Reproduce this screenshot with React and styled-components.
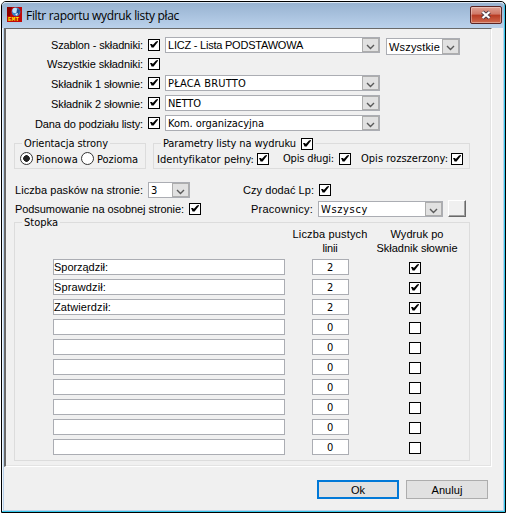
import React, { useLayoutEffect, useRef } from "react";
import styled, { createGlobalStyle } from "styled-components";

const GlobalStyle = createGlobalStyle`
  * {
    box-sizing: border-box;
  }
  body {
    margin: 0;
    background: #fff;
    color: #000;
    font-family: "Liberation Sans", Arial, sans-serif;
    font-size: 11px;
    line-height: 14px;
    overflow: hidden;
  }
`;

// keeps a caption at its designed width, whichever font ends up being used
const Caption = ({ w, children, ...rest }) => {
  const ref = useRef(null);
  useLayoutEffect(() => {
    const el = ref.current;
    el.style.letterSpacing = "0px";
    const natural = el.getBoundingClientRect().width;
    el.style.letterSpacing = `${(w - natural) / el.textContent.length}px`;
  }, [w, children]);
  return (
    <Text ref={ref} {...rest}>
      {children}
    </Text>
  );
};

const CheckBox = ({ checked, ...rest }) => (
  <Box {...rest}>
    {checked && (
      <svg width="10" height="10" viewBox="0 0 10 10">
        <path d="M1 4 L3 4 L3.8 5 L7 1.5 L9 1 L9 1.8 L4.6 7.4 L2.6 7.4 Z" fill="#000" />
      </svg>
    )}
  </Box>
);

const Select = ({ text, textW, $font, $dy, ...rest }) => (
  <SelectBox {...rest}>
    <SelectValue>
      <Caption w={textW} $font={$font} $dy={$dy}>
        {text}
      </Caption>
    </SelectValue>
    <Arrow>
      <svg width="9" height="6" viewBox="0 0 9 6">
        <path d="M1 1 L4.5 4.5 L8 1" fill="none" stroke="#5a5a5a" strokeWidth="1.4" />
      </svg>
    </Arrow>
  </SelectBox>
);

const components = [
  { label: "Szablon - składniki:", w: 92, h: 20, value: "LICZ - Lista PODSTAWOWA", vw: 135, extra: true },
  { label: "Wszystkie składniki:", w: 96, h: 18 },
  { label: "Składnik 1 słownie:", w: 92, h: 20, dy: 1, value: "PŁACA BRUTTO", vw: 78, font: "tahoma" },
  { label: "Składnik 2 słownie:", w: 92, h: 20, dy: 1, value: "NETTO", vw: 33, font: "tahoma" },
  { label: "Dana do podziału listy:", w: 108, h: 20, dy: 1, value: "Kom. organizacyjna", vw: 96, font: "tahoma" },
];

const footer = [
  { name: "Sporządził:", w: 54, lines: 2, print: true },
  { name: "Sprawdził:", w: 52, lines: 2, print: true },
  { name: "Zatwierdził:", w: 57, lines: 2, print: true },
  ...Array.from({ length: 7 }, () => ({ name: "", lines: 0, print: false })),
];

const App = () => {
  return (
    <>
      <GlobalStyle />
      <Window>
        <TitleBar>
          <AppIcon width="15" height="15" viewBox="0 0 15 15">
            <rect width="15" height="15" fill="#c00808" />
            <path d="M0 0 H5 L3 9 H0 Z" fill="#8e0000" />
            <circle cx="9" cy="4.8" r="4.4" fill="#3b7fc4" />
            <circle cx="8" cy="3.4" r="2.6" fill="#bfe0f5" />
            <path d="M10 2 L13 3 L12 7 L9 9 Z" fill="#1d4f94" />
            <path d="M8 7 L11 6 L10 9 Z" fill="#e4f2fa" />
            <text x="1" y="14" fontSize="6" fontWeight="bold" fontFamily="Liberation Mono, monospace" fill="#ffee00" textLength="11">
              EMT
            </text>
          </AppIcon>
          <Caption w={153} $font="title">
            Filtr raportu wydruk listy płac
          </Caption>
          <Close>
            <svg width="12" height="10" viewBox="0 0 12 10">
              <path d="M2.5 2 L9.5 8 M9.5 2 L2.5 8" stroke="#4c3a44" strokeWidth="4" />
              <path d="M2.5 2 L9.5 8 M9.5 2 L2.5 8" stroke="#fff" strokeWidth="2.2" />
            </svg>
          </Close>
        </TitleBar>

        <Panel>
          {components.map((c) => (
            <Row key={c.label} $h={c.h}>
              <Label $w={137}>
                <Caption w={c.w} $dy={c.dy}>
                  {c.label}
                </Caption>
              </Label>
              <CheckBox checked />
              {c.value && <Select $w={215} text={c.value} textW={c.vw} $font={c.font} $dy={c.dy} />}
              {c.extra && <Select $w={74} $h={17} $ml={1} $mt={3} text="Wszystkie" textW={51} />}
            </Row>
          ))}

          <Groups>
            <Group $w={132} $h={33}>
              <Legend>
                <Caption w={84} $font="tahoma">
                  Orientacja strony
                </Caption>
              </Legend>
              <Options $pl={5}>
                <Radio $on />
                <Caption w={42} $font="tahoma" $dy={1}>
                  Pionowa
                </Caption>
                <Radio />
                <Caption w={41} $font="tahoma" $dy={1}>
                  Pozioma
                </Caption>
              </Options>
            </Group>
            <Group $w={317} $h={33}>
              <Legend>
                <Caption w={133} $font="tahoma">
                  Parametry listy na wydruku
                </Caption>
                <CheckBox checked $ml={5} />
              </Legend>
              <Options $pl={3}>
                <Caption w={97} $font="tahoma" $dy={1}>
                  Identyfikator pełny:
                </Caption>
                <CheckBox checked $mt={1} />
                <Caption w={51} $font="tahoma" $ml={11}>
                  Opis długi:
                </Caption>
                <CheckBox checked $ml={2} />
                <Caption w={87} $font="tahoma" $ml={7}>
                  Opis rozszerzony:
                </Caption>
                <CheckBox checked />
              </Options>
            </Group>
          </Groups>

          <Row $h={20} $mt={11}>
            <Label $w={137}>
              <Caption w={128}>Liczba pasków na stronie:</Caption>
            </Label>
            <Select $w={42} text="3" textW={7} $font="tahoma" $dy={1} />
            <Label $w={119}>
              <Caption w={71}>Czy dodać Lp:</Caption>
            </Label>
            <CheckBox checked />
          </Row>
          <Row $h={18}>
            <Label $w={178}>
              <Caption w={169}>Podsumowanie na osobnej stronie:</Caption>
            </Label>
            <CheckBox checked />
            <Label $w={107}>
              <Caption w={62}>Pracownicy:</Caption>
            </Label>
            <Select $w={125} text="Wszyscy" textW={47} $font="tahoma" $dy={1} />
            <Picker />
          </Row>

          <Group $w={456} $h={246} $ml={8} $mt={-3}>
            <Legend>
              <Caption w={34} $font="tahoma">
                Stopka
              </Caption>
            </Legend>
            <Headers>
              <Header>
                <Caption w={75}>Liczba pustych</Caption>
                <Caption w={15}>linii</Caption>
              </Header>
              <Header>
                <Caption w={53}>Wydruk po</Caption>
                <Caption w={81}>Składnik słownie</Caption>
              </Header>
            </Headers>
            <Signers>
              {footer.map((f, index) => (
                <Signer key={index}>
                  <Field>{f.name && <Caption w={f.w}>{f.name}</Caption>}</Field>
                  <Field $center>
                    <Caption w={7} $font="tahoma" $dy={1}>
                      {f.lines}
                    </Caption>
                  </Field>
                  <CheckBox checked={f.print} $mt={2} />
                </Signer>
              ))}
            </Signers>
          </Group>
        </Panel>

        <Actions>
          <Button $primary>
            <Caption w={14}>Ok</Caption>
          </Button>
          <Button>
            <Caption w={31}>Anuluj</Caption>
          </Button>
        </Actions>
      </Window>
    </>
  );
};

const fonts = {
  tahoma: `"DejaVu Sans Condensed", "DejaVu Sans", sans-serif`,
  title: `"Open Sans", "Noto Sans", sans-serif`,
};

const Window = styled.div`
  width: 505px;
  height: 512px;
  margin: 1px 0 0 1px;
  border: 1px solid #000;
  border-radius: 5px 5px 0 0;
  background: #f0f0f0;
  box-shadow: inset -1px -1px 0 #35c8ea, inset 1px 0 0 #eef5fb, inset 2px 0 0 #b9d1ea, inset -2px -2px 0 #b9d1ea;
`;

const TitleBar = styled.div`
  display: flex;
  align-items: center;
  height: 26px;
  margin-right: 1px;
  padding: 0 2px 0 5px;
  border-top: 1px solid #dce8f4;
  border-radius: 4px 4px 0 0;
  background: linear-gradient(#98b3d1, #bad1eb);
`;

const AppIcon = styled.svg`
  margin: -2px 4px 0 0;
`;

const Close = styled.div`
  display: flex;
  align-items: center;
  justify-content: center;
  width: 32px;
  height: 18px;
  margin: -1px 0 0 auto;
  border: 1px solid #5a2525;
  border-radius: 2px;
  background: linear-gradient(#dfa193 0%, #cf7766 45%, #b73a22 50%, #cf6a4e 100%);
  box-shadow: inset 0 0 0 1px rgba(255, 255, 255, 0.35);
`;

const Panel = styled.div`
  width: 488px;
  height: 439px;
  margin-left: 2px;
  padding-top: 6px;
  border: 1px solid;
  border-width: 1px 1px 1px 2px;
  border-color: #696969 #fff #fff #696969;
  box-shadow: inset -1px -1px 0 #e3e3e3;
`;

const Row = styled.div`
  display: flex;
  align-items: center;
  gap: 5px;
  height: ${(p) => p.$h}px;
  margin-top: ${(p) => p.$mt || 0}px;
`;

const Label = styled.div`
  display: flex;
  flex: none;
  justify-content: flex-end;
  width: ${(p) => p.$w}px;
`;

const Text = styled.span`
  flex: none;
  white-space: nowrap;
  font-family: ${(p) => fonts[p.$font] || "inherit"};
  font-size: ${(p) => (p.$font === "title" ? 12 : 11)}px;
  margin-left: ${(p) => p.$ml || 0}px;
  transform: translateY(${(p) => p.$dy || 0}px);
`;

const Box = styled.div`
  flex: none;
  width: 12px;
  height: 12px;
  margin-left: ${(p) => p.$ml || 0}px;
  margin-top: ${(p) => p.$mt || 0}px;
  border: 1px solid #000;
  background: #fff;
  svg {
    display: block;
  }
`;

const SelectBox = styled.div`
  display: flex;
  flex: none;
  width: ${(p) => p.$w}px;
  height: ${(p) => p.$h || 16}px;
  margin-left: ${(p) => p.$ml || 0}px;
  margin-top: ${(p) => p.$mt || 0}px;
  border: 1px solid #abadb3;
  background: #fff;
`;

const SelectValue = styled.div`
  display: flex;
  flex: 1;
  align-items: center;
  min-width: 0;
  padding-left: 2px;
`;

const Arrow = styled.div`
  display: flex;
  align-items: center;
  justify-content: center;
  width: 17px;
  padding-top: 3px;
  border: 1px solid #adadad;
  background: #e1e1e1;
`;

const Groups = styled.div`
  display: flex;
  gap: 7px;
  margin: 3px 0 0 8px;
`;

const Group = styled.fieldset`
  width: ${(p) => p.$w}px;
  height: ${(p) => p.$h}px;
  min-width: 0;
  margin: ${(p) => p.$mt || 0}px 0 0 ${(p) => p.$ml || 0}px;
  padding: 0;
  border: 1px solid #dcdcdc;
`;

const Legend = styled.legend`
  display: flex;
  align-items: center;
  height: 15px;
  margin-left: 7px;
  padding: 0 2px;
`;

const Options = styled.div`
  display: flex;
  align-items: center;
  gap: 3px;
  height: 15px;
  padding-left: ${(p) => p.$pl}px;
`;

const Radio = styled.div`
  flex: none;
  width: 13px;
  height: 13px;
  border: 1px solid #333;
  border-radius: 50%;
  background: ${(p) => (p.$on ? "radial-gradient(circle, #222 3px, #fff 3.6px)" : "#fff")};
`;

const Picker = styled.div`
  width: 18px;
  height: 17px;
  margin-top: -1px;
  border: 1px solid;
  border-color: #fff #696969 #696969 #fff;
  box-shadow: inset -1px -1px 0 #a0a0a0;
`;

const Headers = styled.div`
  display: grid;
  grid-template-columns: 76px 82px;
  column-gap: 8px;
  height: 32px;
  margin: -3px 0 0 277px;
`;

const Header = styled.div`
  display: flex;
  flex-direction: column;
  align-items: center;
  line-height: 14px;
`;

const Signers = styled.div`
  display: grid;
  gap: 4px;
  margin-left: 38px;
`;

const Signer = styled.div`
  display: grid;
  grid-template-columns: 232px 37px 12px;
  align-items: center;
  height: 16px;
  & > :nth-child(2) {
    margin-left: 27px;
    width: 37px;
  }
  & > :nth-child(3) {
    margin-left: 87px;
  }
`;

const Field = styled.div`
  display: flex;
  align-items: center;
  justify-content: ${(p) => (p.$center ? "center" : "flex-start")};
  height: 16px;
  border: 1px solid #abadb3;
  background: #fff;
`;

const Actions = styled.div`
  display: flex;
  justify-content: flex-end;
  gap: 7px;
  padding: 13px 17px 0 0;
`;

const Button = styled.div`
  display: flex;
  align-items: center;
  justify-content: center;
  width: 82px;
  height: 19px;
  border: ${(p) => (p.$primary ? "2px solid #0078d7" : "1px solid #adadad")};
  background: #e1e1e1;
`;

export default App;
